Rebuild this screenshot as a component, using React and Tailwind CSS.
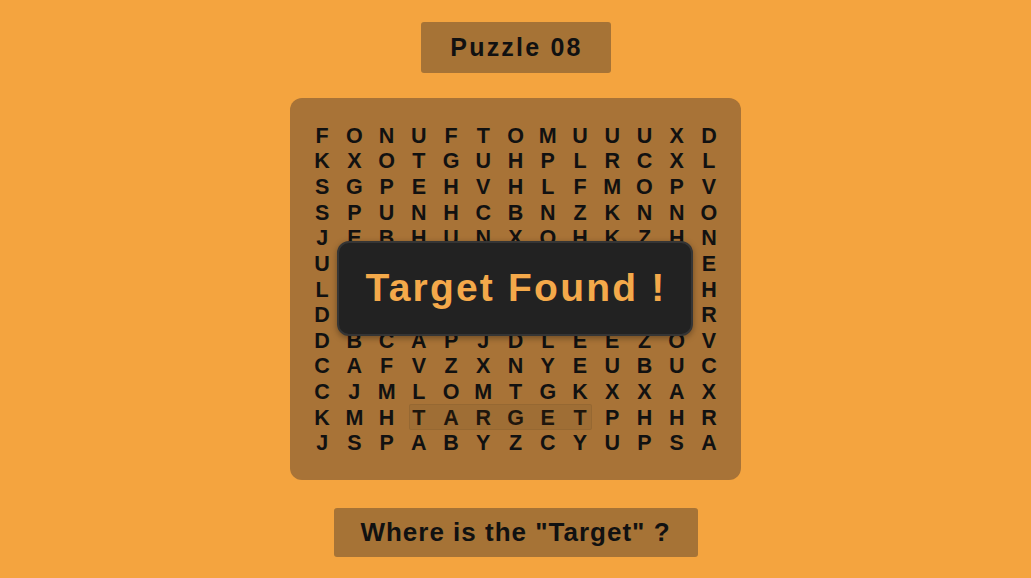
import React from 'react';

const rows = [
  'FONUFTOMUUUXD',
  'KXOTGUHPLRCXL',
  'SGPEHVHLFMOPV',
  'SPUNHCBNZKNNO',
  'JEBHUNXOHKZHN',
  'UWRKSAPDTQMGE',
  'LOCBVIRAJNSFH',
  'DMYTQOLKEWBIR',
  'DBCAPJDLEEZOV',
  'CAFVZXNYEUBUC',
  'CJMLOMTGKXXAX',
  'KMHTARGETPHHR',
  'JSPABYZCYUPSA',
];

const font = { fontFamily: '"Liberation Sans", Arial, sans-serif' };

export default function App() {
  return (
    <div className="w-[1031px] h-[578px] bg-[#f4a43f] flex flex-col items-center pt-[22px]" style={font}>
      {/* Title */}
      <div className="w-[190px] h-[51px] rounded-[3px] bg-[#a67336] flex items-center justify-center">
        <span className="text-[25px] font-bold tracking-[2.2px] text-[#111] pl-[2px]">Puzzle 08</span>
      </div>

      {/* Board */}
      <div className="relative mt-[25px] w-[451px] h-[382px] rounded-[12px] bg-[#a87337] px-[16px] pt-[25.5px] pb-[22.5px]">
        {/* found word highlight, under the letters */}
        <div className="absolute left-[119px] top-[306px] w-[183px] h-[26px] bg-[#9a6a34]/60 border border-[#8c6130]/50 rounded-[2px]" />

        <div className="relative flex flex-col">
          {rows.map((row, r) => (
            <div key={r} className="flex h-[25.67px]">
              {row.split('').map((ch, c) => (
                <span
                  key={c}
                  className={
                    'w-[32.25px] flex items-center justify-center text-[21.5px] font-bold leading-none ' +
                    (r === 11 && c >= 3 && c <= 8 ? 'text-[#1e160d]' : 'text-[#111]')
                  }
                >
                  {ch}
                </span>
              ))}
            </div>
          ))}
        </div>

        {/* result overlay */}
        <div className="absolute left-[47px] top-[143px] w-[356px] h-[95px] rounded-[12px] bg-[#222222] border-2 border-[#353535] shadow-[0_2px_6px_rgba(0,0,0,0.35)] flex items-center justify-center">
          <span className="text-[39px] font-bold tracking-[2.2px] text-[#f4a94a] pl-[2px]">Target Found !</span>
        </div>
      </div>

      {/* Question */}
      <div className="mt-[28px] w-[364px] h-[49px] rounded-[3px] bg-[#a67336] flex items-center justify-center">
        <span className="text-[26px] font-bold tracking-[1px] text-[#111]">Where is the "Target" ?</span>
      </div>
    </div>
  );
}
